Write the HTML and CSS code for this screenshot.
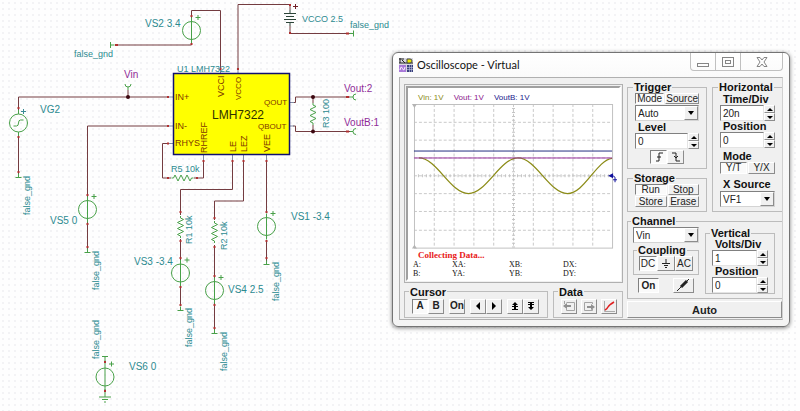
FILE: index.html
```html
<!DOCTYPE html>
<html lang="en">
<head>
    <meta charset="UTF-8">
    <meta name="viewport" content="width=device-width, initial-scale=1.0">
    <title>Oscilloscope - Virtual</title>
    <link rel="stylesheet" href="styles.css">
</head>
<body>
    <main class="canvas">
        <svg class="schematic" width="800" height="411" viewBox="0 0 800 411">
            <defs>
                <g id="source">
                    <circle r="9"/>
                    <path d="M0 -13V13"/>
                    <path class="plus" d="M4 -13h5M6.500 -15.500v5"/>
                </g>
                <path id="tee" d="M0 -4V0M-3 0H3"/>
                <path id="resistor" d="M0 -11V-9L3 -7.500L-3 -4.500L3 -1.500L-3 1.500L3 4.500L-3 7.500L0 9V11"/>
                <path id="probe" d="M0 0H3M6 -3Q3 -3 3 0Q3 3 6 3"/>
            </defs>

            <!-- wires -->
            <g class="wire">
                <path d="M18.500 111V97H168M18.500 136V174"/>
                <path d="M87.500 197V126H168M87.500 222V249"/>
                <path d="M168 143.500H162.500V178H171M194 178H203.500V160"/>
                <path d="M220.500 70V10.500H191.500V18M191.500 44V45H115"/>
                <path d="M238 70V4.500H290V10M290 26V33.500H350"/>
                <path d="M293 102.500H295.500V97H350M293 126H295.500V131.500H350"/>
                <path d="M313 97V103M313 125V131"/>
                <path d="M232.500 160V189.500H180.500V215M180.500 239V260M180.500 286V306"/>
                <path d="M243.500 160V201H214.500V220M214.500 245V278M214.500 303V330"/>
                <path d="M266.500 160V213M266.500 240V261"/>
                <path d="M128 90V97"/>
            </g>

            <!-- chip -->
            <path class="stub" d="M168 97H173M168 126H173M168 143.500H173M203.500 155V160M232.500 155V160M243.500 155V160M266.500 155V160M220.500 70V74M238 70V74M290 102.500H294M290 126H294"/>
            <rect class="chip" x="173.500" y="73.500" width="116" height="81"/>

            <!-- parts -->
            <g class="part">
                <g transform="translate(18.500 123)">
                    <circle r="9"/>
                    <path d="M0 -13V-9M0 9V13M-5 3H-2Q0 3 0 0Q0 -3 2 -3H5"/>
                    <path class="plus" d="M2.500 -11.500h5M5 -14v5"/>
                </g>
                <use href="#source" x="87.500" y="209.500"/>
                <use href="#source" x="191.500" y="30.500"/>
                <use href="#source" x="180.500" y="273"/>
                <use href="#source" x="214.500" y="290.500"/>
                <use href="#source" x="266.500" y="226.500"/>
                <use href="#source" x="105" y="377"/>
                <use href="#tee" x="18.500" y="177.500"/>
                <use href="#tee" x="87.500" y="252.500"/>
                <use href="#tee" x="180.500" y="310.500"/>
                <use href="#tee" x="214.500" y="333.500"/>
                <use href="#tee" x="266.500" y="264.500"/>
                <use href="#tee" transform="translate(105 356.500) rotate(180)"/>
                <use href="#tee" transform="translate(110.500 45) rotate(90)"/>
                <use href="#tee" transform="translate(353.500 33.500) rotate(-90)"/>
                <path d="M105 360V364M105 389V397M99 397H111M102 399.500H108M104 402H106"/>
                <use href="#resistor" x="313" y="114"/>
                <use href="#resistor" x="180.500" y="227"/>
                <use href="#resistor" x="214.500" y="232"/>
                <use href="#resistor" transform="translate(182.500 178) rotate(90)"/>
                <use href="#probe" x="350" y="97"/>
                <use href="#probe" x="350" y="131.500"/>
                <use href="#probe" transform="translate(128 90) rotate(-90)"/>
            </g>
            <path class="battery" d="M284 13.500H296M286 16.500H294M284 19.500H296M286 22.500H294M290 10V13M290 22V26"/>
            <path class="battery-plus" d="M293 6.500h5M295.500 4v5"/>

            <!-- pin ends -->
            <path class="ends" d="M18.500 107v2M18.500 136v2M18.500 171v2M87.500 194v2M87.500 223v2M87.500 246v2M167 97h2M167 126h2M167 143.500h2M167 178h2M196 178h2M203.500 160v2M232.500 160v2M243.500 160v2M266.500 160v2M191.500 15v2M191.500 43v2M115 45h3M220.500 68v2M238 68v2M290 4v2M290 32v2M346 33.500h3M346 97h3M346 131.500h3M180.500 211v2M180.500 240v2M180.500 257v2M180.500 286v2M180.500 304v2M214.500 217v2M214.500 246v2M214.500 275v2M214.500 304v2M214.500 327v2M266.500 211v2M266.500 240v2M266.500 257v2M105 361v2M105 390v2"/>
            <g class="junction">
                <circle cx="128" cy="97" r="2"/>
                <circle cx="313" cy="97" r="2"/>
                <circle cx="313" cy="131.500" r="2"/>
            </g>

            <!-- labels -->
            <g class="label">
                <text x="177" y="72">U1 LMH7322</text>
                <text x="74" y="57">false_gnd</text>
                <text x="350" y="28">false_gnd</text>
                <text x="302" y="22">VCCO 2.5</text>
                <text x="171" y="172">R5 10k</text>
                <text transform="translate(30 215) rotate(-90)">false_gnd</text>
                <text transform="translate(99 290) rotate(-90)">false_gnd</text>
                <text transform="translate(99 359) rotate(-90)">false_gnd</text>
                <text transform="translate(192 347) rotate(-90)">false_gnd</text>
                <text transform="translate(227 371) rotate(-90)">false_gnd</text>
                <text transform="translate(279 301) rotate(-90)">false_gnd</text>
                <text transform="translate(192 244) rotate(-90)">R1 10k</text>
                <text transform="translate(227 250) rotate(-90)">R2 10k</text>
                <text transform="translate(329 128) rotate(-90)">R3 100</text>
            </g>
            <g class="label label-source">
                <text x="145" y="27">VS2 3.4</text>
                <text x="40" y="113">VG2</text>
                <text x="50" y="224">VS5 0</text>
                <text x="134" y="265">VS3 -3.4</text>
                <text x="228" y="293">VS4 2.5</text>
                <text x="291" y="220">VS1 -3.4</text>
                <text x="129" y="370">VS6 0</text>
            </g>
            <g class="label net">
                <text x="124" y="78">Vin</text>
                <text x="344" y="92">Vout:2</text>
                <text x="344" y="126">VoutB:1</text>
            </g>
            <g class="pin">
                <text x="175" y="100">IN+</text>
                <text x="175" y="129">IN-</text>
                <text x="175" y="146">RHYS</text>
                <text transform="translate(224 97) rotate(-90)">VCCI</text>
                <text transform="translate(207 153) rotate(-90)">RHREF</text>
                <text transform="translate(236 152) rotate(-90)">LE</text>
                <text transform="translate(247 152) rotate(-90)">LEZ</text>
                <text transform="translate(270 152) rotate(-90)">VEE</text>
            </g>
            <g class="pin pin-out">
                <text x="264" y="105">QOUT</text>
                <text x="258" y="129">QBOUT</text>
                <text transform="translate(241 100) rotate(-90)">VCCO</text>
            </g>
            <text class="chip-name" x="212" y="119">LMH7322</text>
        </svg>

        <section class="window">
            <header class="titlebar">
                <svg class="app-icon" width="14" height="14" viewBox="0 0 14 14">
                    <rect width="14" height="14" fill="#d8d8e0"/>
                    <path d="M0 1H5M1 0V5M3 2L6 5M0 5H14" stroke="#222" fill="none"/>
                    <path d="M8 1H11Q13 1 13 3Q13 5 11 5H8Z" fill="#e8e800" stroke="#444"/>
                    <rect y="7" width="7" height="7" fill="#a878d8"/>
                    <path d="M1 12Q2 7 3.500 10.500T6 9" stroke="#fff" fill="none"/>
                    <rect x="8" y="7" width="6" height="7" fill="#38407c"/>
                    <path d="M8 9.500H14M8 11.500H14M10.500 7V14M12.500 7V14" stroke="#c4c8e4" stroke-width=".6"/>
                </svg>
                <h1>Oscilloscope - Virtual</h1>
                <div class="window-buttons">
                    <button type="button" aria-label="Minimize"><svg width="14" height="12" viewBox="0 0 14 12"><rect x="1.500" y="7.500" width="11" height="3"/></svg></button>
                    <button type="button" aria-label="Maximize"><svg width="14" height="12" viewBox="0 0 14 12"><rect x="1.500" y="1.500" width="11" height="9"/><rect x="4.500" y="4.500" width="5" height="3"/></svg></button>
                    <button type="button" class="close" aria-label="Close"><svg width="14" height="12" viewBox="0 0 14 12"><path d="M2 1.500H5L7 4L9 1.500H12L9 6L12 10.500H9L7 8L5 10.500H2L5 6Z"/></svg></button>
                </div>
            </header>

            <div class="client">
                <div class="left">
                    <div class="scope">
                        <div class="screen">
                            <div class="traces">
                                <span class="name-vin">Vin: 1V</span>
                                <span class="name-vout">Vout: 1V</span>
                                <span class="name-voutb">VoutB: 1V</span>
                            </div>
                            <svg class="plot" viewBox="0 0 210 147">
                                <path class="grid" d="M23.500 0V145M43.500 0V145M63.500 0V145M83.500 0V145M103.500 0V145M123.500 0V145M143.500 0V145M163.500 0V145M183.500 0V145M3 18.500H203M3 36.500H203M3 54.500H203M3 72.500H203M3 90.500H203M3 108.500H203M3 127.500H203"/>
                                <path class="ticks" d="M3 72.500H203"/>
                                <path class="ticks" d="M103.500 0V145"/>
                                <rect class="frame" x="3.500" y=".5" width="200" height="145"/>
                                <path d="M1 0H6L3.500 4ZM1 146H6L3.500 142Z" fill="#b4b4b4"/>
                                <path class="trace vin" d="M8 54.500C26 54.500 40 90.500 58 90.500S90 54.500 108 54.500S140 90.500 158 90.500C175 90.500 187 57 203 55"/>
                                <path class="trace vout" d="M3 54.500H203"/>
                                <path class="trace voutb" d="M3 47.500H203"/>
                                <path d="M199 72.500L204 70V75Z" fill="#10109c"/>
                                <path d="M204 72.500L206 74V79M204 76.500H208" stroke="#10109c" fill="none"/>
                            </svg>
                            <p class="status">Collecting Data...</p>
                            <div class="readout">
                                <span>A:</span><span>XA:</span><span>XB:</span><span>DX:</span>
                                <span>B:</span><span>YA:</span><span>YB:</span><span>DY:</span>
                            </div>
                        </div>
                    </div>

                    <div class="bottom">
                        <fieldset class="cursor">
                            <legend>Cursor</legend>
                            <div class="tools">
                                <button type="button" class="btn tool pressed">A</button>
                                <button type="button" class="btn tool">B</button>
                                <button type="button" class="btn tool gap">On</button>
                                <button type="button" class="btn tool gap" aria-label="Left"><svg width="10" height="10"><path d="M7 1V9L3 5Z"/></svg></button>
                                <button type="button" class="btn tool" aria-label="Right"><svg width="10" height="10"><path d="M3 1V9L7 5Z"/></svg></button>
                                <button type="button" class="btn tool gap" aria-label="Up"><svg width="10" height="10"><path d="M5 1L8 4H6V5H8V6H2V5H4V4H2ZM2 8H8V9H2ZM4 6H6V8H4Z"/></svg></button>
                                <button type="button" class="btn tool" aria-label="Down"><svg width="10" height="10"><path d="M2 1H8V2H6V3H8V4H2V3H4V2H2ZM2 6H4V4H6V6H8L5 9Z"/></svg></button>
                            </div>
                        </fieldset>
                        <fieldset class="data">
                            <legend>Data</legend>
                            <div class="tools">
                                <button type="button" class="btn tool" aria-label="Import"><svg width="14" height="13"><path d="M4.500 2.500H12.500V10.500H4.500V8.500M2.500 1V4" fill="none" stroke="#a4a4a4"/><path d="M1 6L5 3V5H9V7H5V9Z" fill="#909090" stroke="none"/></svg></button>
                                <button type="button" class="btn tool" aria-label="Export"><svg width="14" height="13"><path d="M10.500 4V2.500H2.500V10.500H10.500V9" fill="none" stroke="#a4a4a4"/><path d="M13 7L9 4V6H5V8H9V10Z" fill="#909090" stroke="none"/></svg></button>
                                <button type="button" class="btn tool" aria-label="Curve"><svg width="14" height="13"><path d="M2.500 1V11.500H13" fill="none" stroke="#aaa"/><path d="M3 10Q5 9 6 7T12 2" fill="none" stroke="#e02020" stroke-width="1.500"/></svg></button>
                            </div>
                        </fieldset>
                    </div>
                </div>

                <div class="right">
                    <div class="upper">
                        <div class="column">
                            <fieldset class="trigger">
                                <legend>Trigger</legend>
                                <div class="pair">
                                    <button type="button" class="btn pressed">Mode</button>
                                    <button type="button" class="btn">Source</button>
                                </div>
                                <div class="select">
                                    <select aria-label="Trigger mode"><option>Auto</option></select>
                                    <span class="arrow"></span>
                                </div>
                                <label for="level">Level</label>
                                <div class="spin">
                                    <input id="level" type="text" value="0">
                                    <button type="button" class="up" aria-label="Increase"></button>
                                    <button type="button" class="down" aria-label="Decrease"></button>
                                </div>
                                <div class="edges">
                                    <button type="button" class="btn pressed" aria-label="Rising edge"><svg width="10" height="10"><path d="M2 9H5V1H9M3 5H7"/></svg></button>
                                    <button type="button" class="btn" aria-label="Falling edge"><svg width="10" height="10"><path d="M1 1H5V9H9M3 4L5 6L7 4"/></svg></button>
                                </div>
                            </fieldset>
                            <fieldset class="storage">
                                <legend>Storage</legend>
                                <div class="pair">
                                    <button type="button" class="btn pressed">Run</button>
                                    <button type="button" class="btn">Stop</button>
                                    <button type="button" class="btn">Store</button>
                                    <button type="button" class="btn">Erase</button>
                                </div>
                            </fieldset>
                        </div>

                        <fieldset class="horizontal">
                            <legend>Horizontal</legend>
                            <label for="timediv">Time/Div</label>
                            <div class="spin">
                                <input id="timediv" type="text" value="20n">
                                <button type="button" class="up" aria-label="Increase"></button>
                                <button type="button" class="down" aria-label="Decrease"></button>
                            </div>
                            <label for="hpos">Position</label>
                            <div class="spin">
                                <input id="hpos" type="text" value="0">
                                <button type="button" class="up" aria-label="Increase"></button>
                                <button type="button" class="down" aria-label="Decrease"></button>
                            </div>
                            <p class="caption">Mode</p>
                            <div class="pair">
                                <button type="button" class="btn pressed">Y/T</button>
                                <button type="button" class="btn">Y/X</button>
                            </div>
                            <label for="xsource">X Source</label>
                            <div class="select">
                                <select id="xsource"><option>VF1</option></select>
                                <span class="arrow"></span>
                            </div>
                        </fieldset>
                    </div>

                    <fieldset class="channel">
                        <legend>Channel</legend>
                        <div class="channel-body">
                            <div class="channel-left">
                                <div class="select">
                                    <select aria-label="Channel"><option>Vin</option></select>
                                    <span class="arrow"></span>
                                </div>
                                <fieldset class="coupling">
                                    <legend>Coupling</legend>
                                    <div class="triple">
                                        <button type="button" class="btn pressed">DC</button>
                                        <button type="button" class="btn" aria-label="Ground"><svg width="10" height="10"><path d="M5 0V4M1 4.500H9M3 6.500H7M4 8.500H6"/></svg></button>
                                        <button type="button" class="btn">AC</button>
                                    </div>
                                </fieldset>
                                <div class="channel-tools">
                                    <button type="button" class="btn bold pressed">On</button>
                                    <button type="button" class="btn" aria-label="Probe"><svg width="18" height="13"><path d="M2 12L7 7"/><path d="M6 8L12 2" stroke-width="3"/><path d="M12 2L14 0"/></svg></button>
                                </div>
                            </div>
                            <fieldset class="vertical">
                                <legend>Vertical</legend>
                                <label for="voltsdiv">Volts/Div</label>
                                <div class="spin">
                                    <input id="voltsdiv" type="text" value="1">
                                    <button type="button" class="up" aria-label="Increase"></button>
                                    <button type="button" class="down" aria-label="Decrease"></button>
                                </div>
                                <label for="vpos">Position</label>
                                <div class="spin">
                                    <input id="vpos" type="text" value="0">
                                    <button type="button" class="up" aria-label="Increase"></button>
                                    <button type="button" class="down" aria-label="Decrease"></button>
                                </div>
                            </fieldset>
                        </div>
                    </fieldset>

                    <button type="button" class="btn auto">Auto</button>
                </div>
            </div>
        </section>
    </main>
</body>
</html>
```
FILE: styles.css
```css
* {
    box-sizing: border-box;
}
body {
    margin: 0;
    font-family: "Liberation Sans", Arial, sans-serif;
    font-size: 10px;
    color: #111;
    background-color: #fefefe;
}
.canvas {
    position: relative;
    min-height: 100vh;
    overflow: hidden;
    background-image: radial-gradient(circle, #ececee 0, #f6f6f8 1px, transparent 1px);
    background-size: 6px 6px;
}

/* schematic */
.schematic {
    display: block;
}
.wire {
    fill: none;
    stroke: #743c40;
}
.stub {
    fill: none;
    stroke: #8088a0;
}
.chip {
    fill: #ffff00;
    stroke: #101070;
    stroke-width: 1.5;
}
.part {
    fill: none;
    stroke: #48a048;
}
.part .plus {
    stroke: #3a8c94;
}
.battery {
    fill: none;
    stroke: #2c4438;
}
.battery-plus {
    stroke: #702028;
}
.ends {
    fill: none;
    stroke: #b03030;
    stroke-width: 2;
}
.junction {
    fill: #3c0810;
}
.label {
    font-size: 9px;
    fill: #2c8a90;
}
.label-source {
    font-size: 10px;
}
.net {
    font-size: 10px;
    fill: #902c98;
}
.pin {
    font-size: 9px;
    fill: #803800;
}
.pin-out {
    font-size: 8px;
}
.chip-name {
    font-size: 12px;
    fill: #303000;
}

/* window */
.window {
    position: absolute;
    top: 52px;
    left: 392px;
    right: 10px;
    padding: 0 6px 6px;
    border: 1px solid #747474;
    border-radius: 6px;
    background: linear-gradient(#fff, #fafafa 24px, #f4f4f4);
    box-shadow: 0 1px 4px rgba(0, 0, 0, 0.5);
}
.titlebar {
    display: flex;
    height: 24px;
}
.app-icon {
    margin: 5px 4px 0 0;
}
h1 {
    flex: 1;
    margin: 0;
    font-family: Lato, sans-serif;
    font-size: 11px;
    font-weight: normal;
    line-height: 24px;
}
.window-buttons {
    display: flex;
    height: 18px;
    border: 1px solid #c0c0c0;
    border-top: 0;
    border-radius: 0 0 4px 4px;
}
.window-buttons button {
    width: 25px;
    padding: 0;
    border: 0;
    border-right: 1px solid #c0c0c0;
    background: none;
}
.window-buttons .close {
    width: 41px;
    border-right: 0;
}
.window-buttons svg {
    display: block;
    margin: auto;
    fill: none;
    stroke: #858585;
}
.client {
    display: flex;
    gap: 4px;
    padding: 3px 0 1px 4px;
    border: 1px solid #b0b0b0;
    border-right-color: #d0d0d0;
    background-color: #f0f0f0;
}
.left {
    flex: 1;
    padding-top: 3px;
}
.right {
    width: 155px;
}

/* shared controls */
fieldset {
    min-width: 0;
    margin: 0;
    padding: 0;
    border: 1px solid #bcbcbc;
}
legend {
    margin-left: -2px;
    padding: 0 1px;
    font-size: 11px;
    font-weight: bold;
    line-height: 12px;
}
label,
.caption {
    display: block;
    margin: 0;
    padding-left: 3px;
    font-size: 11px;
    font-weight: bold;
    line-height: 11px;
}
.btn {
    display: flex;
    align-items: center;
    justify-content: center;
    padding: 0;
    border: 1px solid;
    border-color: #fff #8c8c8c #8c8c8c #fff;
    font-family: inherit;
    font-size: 10px;
    line-height: 10px;
    color: #222;
    background-color: #f0f0f0;
}
.btn.pressed {
    border-color: #808080 #fff #fff #808080;
    background-color: #fafafa;
}
.btn svg {
    flex: none;
    fill: none;
    stroke: #222;
}
.pair {
    display: grid;
    grid-template-columns: 1fr 1fr;
    gap: 1px;
}
.pair .btn {
    height: 11px;
}
.select {
    position: relative;
    height: 16px;
}
select {
    appearance: none;
    display: block;
    width: 100%;
    height: 100%;
    padding: 0 2px;
    border: 1px solid;
    border-color: #808080 #d4d4d4 #d4d4d4 #808080;
    border-radius: 0;
    font-family: inherit;
    font-size: 10px;
    color: #222;
    background-color: #fff;
}
.arrow {
    position: absolute;
    top: 1px;
    right: 1px;
    bottom: 1px;
    width: 14px;
    border: 1px solid;
    border-color: #fff #8c8c8c #8c8c8c #fff;
    background-color: #f0f0f0;
    pointer-events: none;
}
.arrow::after {
    content: "";
    display: block;
    width: 0;
    margin: 4px auto 0;
    border: 3px solid transparent;
    border-top: 4px solid #000;
    border-bottom: 0;
}
.spin {
    display: grid;
    grid-template-columns: 1fr 11px;
    grid-template-rows: 8px 8px;
}
.spin input {
    grid-row: 1 / 3;
    width: 100%;
    min-width: 0;
    padding: 0 2px;
    border: 1px solid;
    border-color: #808080 #e4e4e4 #e4e4e4 #808080;
    font-family: inherit;
    font-size: 10px;
    color: #222;
    background-color: #fff;
}
.spin button {
    padding: 0;
    border: 1px solid;
    border-color: #fff #8c8c8c #8c8c8c #fff;
    background-color: #f0f0f0;
}
.spin button::after {
    content: "";
    display: block;
    width: 0;
    margin: auto;
    border: 3px solid transparent;
}
.spin .up::after {
    border-top: 0;
    border-bottom-color: #000;
}
.spin .down::after {
    border-top-color: #000;
    border-bottom: 0;
}

/* scope screen */
.scope {
    padding: 1px;
    border: 1px solid #b0b0b0;
}
.screen {
    padding: 4px 0 1px 3px;
    border: 2px solid;
    border-color: #a0a0a0 #fff #fff #a0a0a0;
    background-color: #fff;
}
.traces {
    display: flex;
    gap: 10px;
    padding-left: 7px;
    font-size: 8px;
    line-height: 12px;
}
.name-vin {
    color: #8c8c20;
}
.name-vout {
    color: #8c208c;
}
.name-voutb {
    color: #20208c;
}
.plot {
    display: block;
    width: 100%;
}
.grid {
    fill: none;
    stroke: #c8c8c8;
    stroke-dasharray: 3 2;
}
.ticks {
    fill: none;
    stroke: #c4c4c4;
    stroke-width: 3;
    stroke-dasharray: 1 3;
}
.frame {
    fill: none;
    stroke: #c0c0c0;
}
.trace {
    fill: none;
}
.trace.vin {
    stroke: #8c8c18;
    stroke-width: 1.3;
}
.trace.vout {
    stroke: #98309c;
}
.trace.voutb {
    stroke: #202c80;
}
.status {
    margin: 0;
    padding-left: 7px;
    font-family: "Liberation Serif", serif;
    font-size: 9px;
    font-weight: bold;
    line-height: 10px;
    color: #e82020;
}
.readout {
    display: grid;
    grid-template-columns: 39px 57px 54px 1fr;
    padding-left: 2px;
    font-family: "Liberation Serif", serif;
    font-size: 8px;
    line-height: 9px;
}

/* cursor and data rows */
.bottom {
    display: flex;
    justify-content: space-between;
    margin-top: 3px;
}
.bottom legend {
    margin-left: 4px;
}
.cursor {
    width: 144px;
}
.data {
    width: 70px;
}
.tools {
    display: flex;
    padding: 1px 0 3px 7px;
}
.tool {
    width: 16px;
    height: 15px;
    font-weight: bold;
}
.tool.gap {
    margin-left: 5px;
}
.cursor .tool svg {
    fill: #000;
    stroke: none;
}
.data .tools {
    gap: 4px;
}

/* right panels */
.upper {
    display: grid;
    grid-template-columns: 80px 1fr;
    gap: 5px;
}
.column {
    display: flex;
    flex-direction: column;
    gap: 3px;
}
.trigger,
.storage {
    padding: 0 7px 4px;
}
.trigger .select {
    margin: 1px 0;
}
.edges {
    display: flex;
    justify-content: center;
    margin-top: 1px;
}
.edges .btn {
    width: 17px;
    height: 14px;
}
.horizontal {
    padding: 1px 7px 4px;
    border-right: 0;
}
.horizontal .caption {
    margin-top: 3px;
}
.horizontal .pair {
    margin-bottom: 5px;
}
.horizontal .pair .btn {
    height: 12px;
}
.horizontal .select {
    margin-top: 1px;
}
.channel {
    margin-top: 3px;
    padding: 0 5px 4px;
    border-right: 0;
}
.channel-body {
    display: grid;
    grid-template-columns: 66px 70px;
    align-items: start;
    gap: 6px;
}
.coupling {
    margin-top: 1px;
    padding: 0 5px 3px;
}
.triple {
    display: grid;
    grid-template-columns: 1fr 1fr 1fr;
}
.triple .btn {
    height: 15px;
}
.channel-tools {
    display: flex;
    justify-content: space-between;
    margin-top: 3px;
    padding: 0 5px;
}
.channel-tools .btn {
    width: 21px;
    height: 15px;
}
.btn.bold {
    font-weight: bold;
}
.vertical {
    padding: 0 6px;
}
.auto {
    width: 100%;
    height: 17px;
    margin-top: 2px;
    font-size: 11px;
    font-weight: bold;
}
```
